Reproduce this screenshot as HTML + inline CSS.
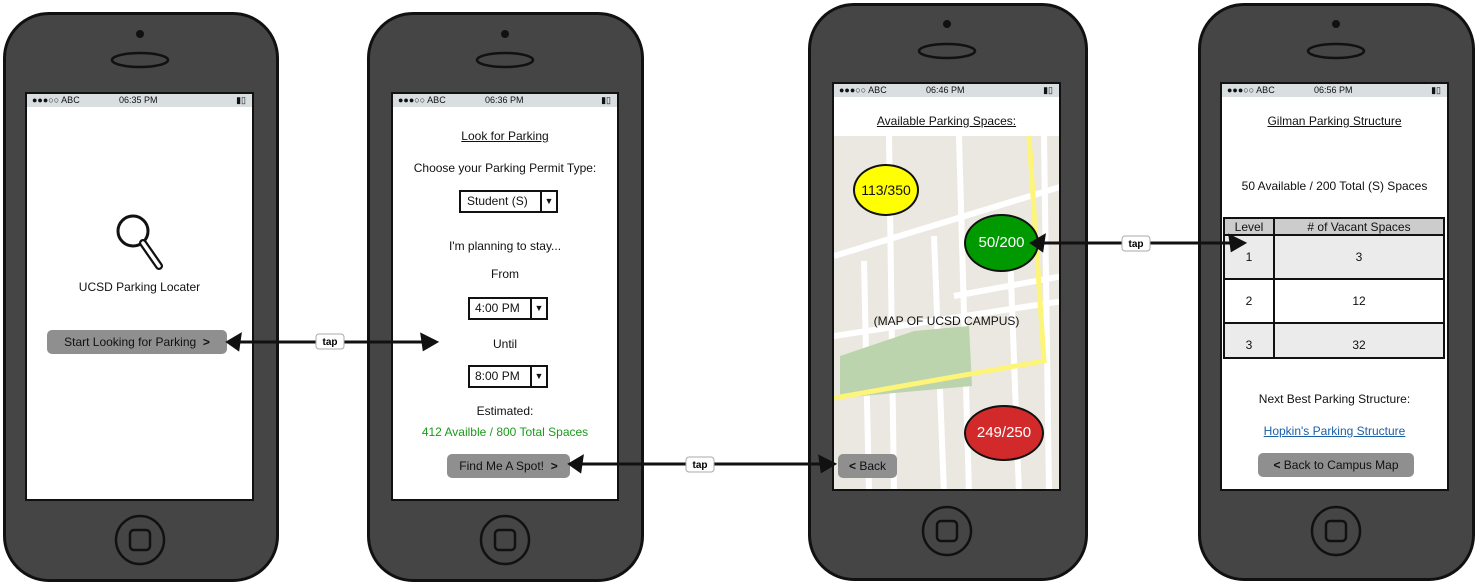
<!DOCTYPE html>
<html><head><meta charset="utf-8"><style>
body{margin:0;width:1477px;height:583px;background:#fff;position:relative;overflow:hidden;font-family:"Liberation Sans",sans-serif;font-size:12px;color:#111}
.a{position:absolute}
.ph{position:absolute;background:#454545;border:3px solid #111;border-radius:46px;box-sizing:border-box}
.sc{position:absolute;background:#fff;border:2px solid #111;box-sizing:border-box;overflow:hidden}
.sb{position:absolute;left:0;right:0;top:0;height:13px;background:#d9dee0;font-size:9px;line-height:13px}
.c{position:absolute;text-align:center;white-space:nowrap}
.btn{position:absolute;background:#8f8f8f;border-radius:5px;text-align:center;line-height:24px;font-size:12px}
.sel{position:absolute;border:2px solid #111;background:#fff;box-sizing:border-box;font-size:12px;line-height:18px}
.sel i{position:absolute;right:0;top:0;bottom:0;width:14px;border-left:2px solid #111;font-style:normal;font-size:9px;text-align:center}
.u{text-decoration:underline}
td{border:2px solid #111;padding:0}
</style></head><body>

<div class="ph" style="left:3px;top:12px;width:276px;height:570px"></div>
<div class="ph" style="left:367px;top:12px;width:277px;height:570px"></div>
<div class="ph" style="left:808px;top:3px;width:280px;height:578px"></div>
<div class="ph" style="left:1198px;top:3px;width:277px;height:578px"></div>

<svg class="a" style="left:0;top:0" width="1477" height="583">
<g fill="#111"><circle cx="140" cy="34" r="4"/><circle cx="505" cy="34" r="4"/><circle cx="947" cy="24" r="4"/><circle cx="1336" cy="24" r="4"/></g>
<g fill="none" stroke="#111" stroke-width="2.5">
<ellipse cx="140" cy="60" rx="28" ry="7"/><ellipse cx="505" cy="60" rx="28" ry="7"/><ellipse cx="947" cy="51" rx="28" ry="7"/><ellipse cx="1336" cy="51" rx="28" ry="7"/>
<circle cx="140" cy="540" r="24"/><rect x="130" y="530" width="20" height="20" rx="4"/>
<circle cx="505" cy="540" r="24"/><rect x="495" y="530" width="20" height="20" rx="4"/>
<circle cx="947" cy="531" r="24"/><rect x="937" y="521" width="20" height="20" rx="4"/>
<circle cx="1336" cy="531" r="24"/><rect x="1326" y="521" width="20" height="20" rx="4"/>
</g></svg>

<div class="sc" style="left:25px;top:92px;width:229px;height:409px">
 <div class="sb"><span class="a" style="left:5px">●●●○○ ABC</span><span class="a" style="left:92px">06:35 PM</span><span class="a" style="right:6px">▮▯</span></div>
 <svg class="a" style="left:86px;top:118px" width="56" height="64"><circle cx="20" cy="19" r="15" fill="none" stroke="#111" stroke-width="3"/><path d="M30 31 L46 54" stroke="#111" stroke-width="8" stroke-linecap="round"/><path d="M30 31 L46 54" stroke="#fff" stroke-width="3.5" stroke-linecap="round"/></svg>
 <div class="c" style="left:0;right:0;top:186px">UCSD Parking Locater</div>
 <div class="btn" style="left:20px;top:236px;width:180px">Start Looking for Parking &nbsp;<b>&gt;</b></div>
</div>

<div class="sc" style="left:391px;top:92px;width:228px;height:409px">
 <div class="sb"><span class="a" style="left:5px">●●●○○ ABC</span><span class="a" style="left:92px">06:36 PM</span><span class="a" style="right:6px">▮▯</span></div>
 <div class="c u" style="left:0;right:0;top:35px">Look for Parking</div>
 <div class="c" style="left:0;right:0;top:67px">Choose your Parking Permit Type:</div>
 <div class="sel" style="left:66px;top:96px;width:99px;height:23px;padding-left:6px">Student (S)<i>▼</i></div>
 <div class="c" style="left:0;right:0;top:145px">I'm planning to stay...</div>
 <div class="c" style="left:0;right:0;top:173px">From</div>
 <div class="sel" style="left:75px;top:203px;width:80px;height:23px;padding-left:5px">4:00 PM<i>▼</i></div>
 <div class="c" style="left:0;right:0;top:243px">Until</div>
 <div class="sel" style="left:75px;top:271px;width:80px;height:23px;padding-left:5px">8:00 PM<i>▼</i></div>
 <div class="c" style="left:0;right:0;top:310px">Estimated:</div>
 <div class="c" style="left:0;right:0;top:331px;color:#1a9a1a">412 Availble / 800 Total Spaces</div>
 <div class="btn" style="left:54px;top:360px;width:123px">Find Me A Spot! &nbsp;<b>&gt;</b></div>
</div>

<div class="sc" style="left:832px;top:82px;width:229px;height:409px">
 <div class="sb"><span class="a" style="left:5px">●●●○○ ABC</span><span class="a" style="left:92px">06:46 PM</span><span class="a" style="right:6px">▮▯</span></div>
 <div class="c u" style="left:0;right:0;top:30px">Available Parking Spaces:</div>
 <svg class="a" style="left:0;top:52px" width="229" height="357">
  <rect width="229" height="357" fill="#ebe8e1"/>
  <g stroke="#fff" stroke-width="6" fill="none">
   <path d="M0 120 L229 50"/><path d="M0 200 L229 165"/><path d="M120 160 L229 140"/>
   <path d="M55 0 L60 357"/><path d="M125 0 L135 357"/><path d="M30 125 L35 357"/><path d="M100 100 L110 357"/><path d="M175 90 L185 357"/><path d="M210 0 L215 357"/>
  </g>
  <path d="M6 220 L80 195 L135 190 L138 250 L6 262 Z" fill="#bcd4ad"/>
  <path d="M195 0 L210 225 L0 262" stroke="#fdf47a" stroke-width="5" fill="none"/>
 </svg>
 <div class="c" style="left:0;right:0;top:230px">(MAP OF UCSD CAMPUS)</div>
 <div class="a" style="left:19px;top:80px;width:66px;height:52px;border:2px solid #111;border-radius:50%;background:#ffff00;box-sizing:border-box;text-align:center;line-height:48px;font-size:14px">113/350</div>
 <div class="a" style="left:130px;top:130px;width:75px;height:58px;border:2px solid #111;border-radius:50%;background:#009900;box-sizing:border-box;text-align:center;line-height:54px;font-size:15px;color:#fff">50/200</div>
 <div class="a" style="left:130px;top:321px;width:80px;height:56px;border:2px solid #111;border-radius:50%;background:#d22a2a;box-sizing:border-box;text-align:center;line-height:52px;font-size:15px;color:#fff">249/250</div>
 <div class="btn" style="left:4px;top:370px;width:59px"><b>&lt;</b> Back</div>
</div>

<div class="sc" style="left:1220px;top:82px;width:229px;height:409px">
 <div class="sb"><span class="a" style="left:5px">●●●○○ ABC</span><span class="a" style="left:92px">06:56 PM</span><span class="a" style="right:6px">▮▯</span></div>
 <div class="c u" style="left:0;right:0;top:30px">Gilman Parking Structure</div>
 <div class="c" style="left:0;right:0;top:95px">50 Available / 200 Total (S) Spaces</div>
 <table class="a" style="left:1px;top:133px;width:222px;border-collapse:collapse;font-size:12px;text-align:center">
  <tr style="height:17px;background:#ccc"><td style="width:48px">Level</td><td>#  of Vacant Spaces</td></tr>
  <tr style="height:44px;background:#ebebeb"><td>1</td><td>3</td></tr>
  <tr style="height:44px;background:#fff"><td>2</td><td>12</td></tr>
  <tr style="height:35px;background:#ebebeb"><td style="padding-top:8px">3</td><td style="padding-top:8px">32</td></tr>
 </table>
 <div class="c" style="left:0;right:0;top:308px">Next Best Parking Structure:</div>
 <div class="c u" style="left:0;right:0;top:340px;color:#1a5fa8">Hopkin's Parking Structure</div>
 <div class="btn" style="left:36px;top:369px;width:156px"><b>&lt;</b> Back to Campus Map</div>
</div>

<svg class="a" style="left:0;top:0" width="1477" height="583">
 <g stroke="#111" stroke-width="3" fill="#111">
  <path d="M236 342 L428 342"/><path d="M228 342 L240 335 L238 349 Z"/><path d="M436 342 L422 335 L424 349 Z"/>
  <path d="M578 464 L826 464"/><path d="M570 464 L582 457 L580 471 Z"/><path d="M834 464 L820 457 L822 471 Z"/>
  <path d="M1040 243 L1236 243"/><path d="M1032 243 L1044 236 L1042 250 Z"/><path d="M1244 243 L1230 236 L1232 250 Z"/>
 </g>
 <g font-family="Liberation Sans, sans-serif" font-size="10" font-weight="bold" text-anchor="middle">
  <rect x="316" y="334" width="28" height="15" rx="3" fill="#fff" stroke="#aaa"/><text x="330" y="345">tap</text>
  <rect x="686" y="457" width="28" height="15" rx="3" fill="#fff" stroke="#aaa"/><text x="700" y="468">tap</text>
  <rect x="1122" y="236" width="28" height="15" rx="3" fill="#fff" stroke="#aaa"/><text x="1136" y="247">tap</text>
 </g>
</svg>
</body></html>
